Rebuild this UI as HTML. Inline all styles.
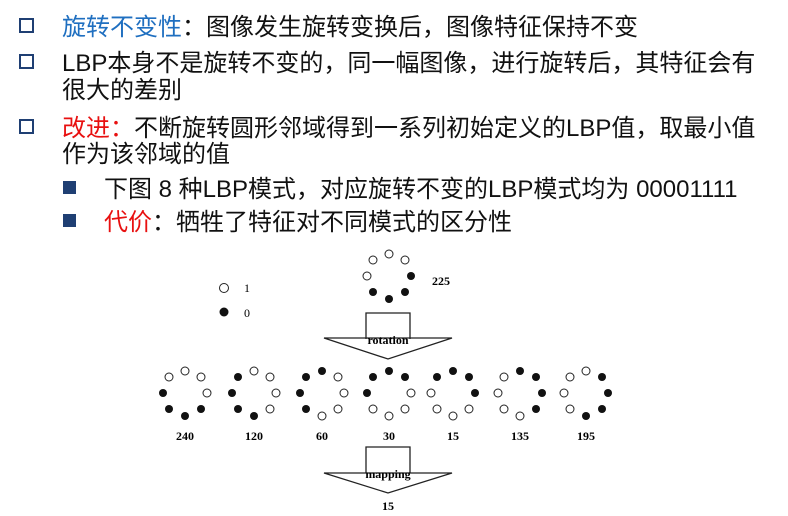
<!DOCTYPE html>
<html><head><meta charset="utf-8"><style>
body{margin:0;width:788px;height:516px;background:#fff;overflow:hidden;position:relative;font-family:"Liberation Sans","Noto Sans CJK SC",sans-serif;color:#111;}
.t{position:absolute;font-size:24px;line-height:26px;white-space:nowrap;}
.b{position:absolute;width:11px;height:11px;border:2.5px solid #1f3f73;}
.f{position:absolute;width:13px;height:13px;background:#1f3f73;}
.blue{color:#1f6fc0}.red{color:#e81010}
svg{position:absolute;left:0;top:0}
svg text{font-family:"Liberation Serif",serif;font-weight:bold;font-size:12px;}
</style></head><body>
<div class="b" style="left:19px;top:18px"></div>
<div class="t" style="left:62px;top:15px"><span class="blue">旋转不变性</span>：图像发生旋转变换后，图像特征保持不变</div>
<div class="b" style="left:19px;top:54px"></div>
<div class="t" style="left:62px;top:51px">LBP本身不是旋转不变的，同一幅图像，进行旋转后，其特征会有</div>
<div class="t" style="left:62px;top:78px">很大的差别</div>
<div class="b" style="left:19px;top:119px"></div>
<div class="t" style="left:62px;top:116px"><span class="red">改进：</span>不断旋转圆形邻域得到一系列初始定义的LBP值，取最小值</div>
<div class="t" style="left:62px;top:142px">作为该邻域的值</div>
<div class="f" style="left:63px;top:181px"></div>
<div class="t" style="left:104px;top:177px">下图 8 种LBP模式，对应旋转不变的LBP模式均为 00001111</div>
<div class="f" style="left:63px;top:214px"></div>
<div class="t" style="left:104px;top:210px"><span class="red">代价</span>：牺牲了特征对不同模式的区分性</div>
<svg id="s" width="788" height="516">
<g fill="none" stroke="#222" stroke-width="1.3">
<path d="M366 339V313H410V339"/><path d="M324 338H452L388 359Z"/>
<path d="M366 473V447H410V473"/><path d="M324 473H452L388 493Z"/>
</g>
<text x="388" y="344" text-anchor="middle">rotation</text>
<text x="388" y="478" text-anchor="middle">mapping</text>
<text x="388" y="510" text-anchor="middle">15</text>
<text x="432" y="285">225</text>
<circle cx="224" cy="288" r="4.5" fill="#fff" stroke="#222"/>
<circle cx="224" cy="312" r="4.5" fill="#111"/>
<text x="244" y="292" style="font-weight:normal">1</text>
<text x="244" y="317" style="font-weight:normal">0</text>
</svg>
<script>
var s=document.getElementById('s'),ns='http://www.w3.org/2000/svg';
var off=[[0,-22],[16,-16],[22,0],[16,16],[0,23],[-16,16],[-22,0],[-16,-16]];
function pat(cx,cy,p){for(var i=0;i<8;i++){var c=document.createElementNS(ns,'circle');c.setAttribute('cx',cx+off[i][0]);c.setAttribute('cy',cy+off[i][1]);
if(p[i]=='1'){c.setAttribute('r',4);c.setAttribute('fill','#111');}else{c.setAttribute('r',4);c.setAttribute('fill','#fff');c.setAttribute('stroke','#222');c.setAttribute('stroke-width','1');}s.appendChild(c);}}
function tx(x,y,t){var e=document.createElementNS(ns,'text');e.setAttribute('x',x);e.setAttribute('y',y);e.setAttribute('text-anchor','middle');e.textContent=t;s.appendChild(e);}
pat(389,276,'00111100');
var P=[[185,'00011110','240'],[254,'00001111','120'],[322,'10000111','60'],[389,'11000011','30'],[453,'11100001','15'],[520,'11110000','135'],[586,'01111000','195']];
P.forEach(function(q){pat(q[0],393,q[1]);tx(q[0],440,q[2]);});
</script>
</body></html>
